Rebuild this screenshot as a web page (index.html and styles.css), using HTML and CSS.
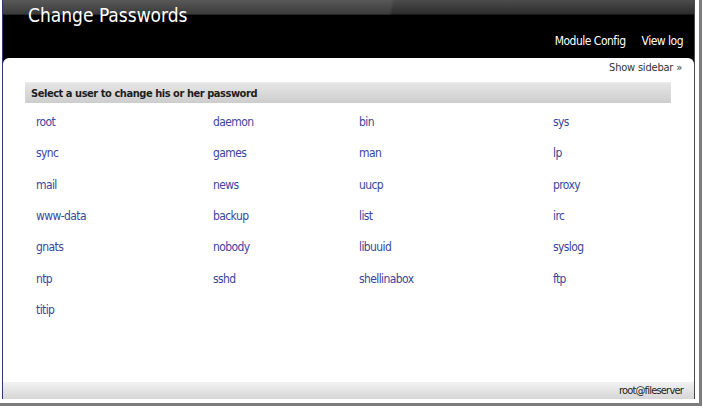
FILE: index.html
```html
<!DOCTYPE html>
<html lang="en">

<head>
  <link rel="stylesheet" href="styles.css">
</head>

<body>
  <div class="screen">
    <div class="window">
      <div class="topbar">
        <h1 class="title">Change Passwords</h1>
        <div class="toplinks">
          <a href="#">Module Config</a>
          <a href="#">View log</a>
        </div>
      </div>

      <div class="panel">
        <div class="sidebar-toggle"><a href="#">Show sidebar &raquo;</a></div>
        <div class="section-head">Select a user to change his or her password</div>
        <div class="users">
          <a href="#">root</a><a href="#">daemon</a><a href="#">bin</a><a href="#">sys</a>
          <a href="#">sync</a><a href="#">games</a><a href="#">man</a><a href="#">lp</a>
          <a href="#">mail</a><a href="#">news</a><a href="#">uucp</a><a href="#">proxy</a>
          <a href="#">www-data</a><a href="#">backup</a><a href="#">list</a><a href="#">irc</a>
          <a href="#">gnats</a><a href="#">nobody</a><a href="#">libuuid</a><a href="#">syslog</a>
          <a href="#">ntp</a><a href="#">sshd</a><a href="#">shellinabox</a><a href="#">ftp</a>
          <a href="#">titip</a>
        </div>
      </div>

      <div class="statusbar">root@fileserver</div>
    </div>
  </div>
</body>

</html>
```

FILE: styles.css
```css
body {
  margin: 0;
  background: #fff;
  font-family: 'DejaVu Sans Condensed', 'DejaVu Sans', sans-serif;
}

a {
  text-decoration: none;
}

/* screenshot frame: thin grey shadow right and below */
.screen {
  width: 702px;
  height: 406px;
  box-sizing: border-box;
  padding: 0 4px 4px 2px;
  border-right: 3px solid #7c7c7c;
  border-bottom: 3px solid #7c7c7c;
}

.window {
  width: 693px;
  height: 399px;
  box-sizing: border-box;
  border-left: 1px solid #2e3a6c;
  border-right: 1px solid #4a4a4a;
  display: flex;
  flex-direction: column;
  background: #000;
}

.topbar {
  height: 58px;
  flex: none;
  display: flex;
  flex-direction: column;
  justify-content: space-between;
  padding: 0 11px 0 25px;
  background:
    linear-gradient(100deg, rgba(255, 255, 255, 0.07) 0, rgba(255, 255, 255, 0.07) 56%, transparent 56.5%) top / 100% 15px no-repeat,
    linear-gradient(to bottom, #4c4c4c 0, #2c2c2c 14px, #000 15px);
}

.title {
  margin: 3px 0 0;
  font-size: 19px;
  font-weight: normal;
  color: #fff;
  line-height: 24px;
}

.toplinks {
  display: flex;
  justify-content: flex-end;
  gap: 16px;
  margin-bottom: 9px;
}

.toplinks a {
  color: #fff;
  font-size: 12px;
  line-height: 16px;
  letter-spacing: -0.5px;
}

.panel {
  flex: 1;
  background: #fff;
  border-radius: 6px 6px 0 0;
  padding: 0 23px 0 22px;
}

.sidebar-toggle {
  text-align: right;
  margin-right: -11px;
  padding-top: 3px;
  height: 24px;
  box-sizing: border-box;
  font-size: 11px;
  line-height: 14px;
}

.sidebar-toggle a {
  color: #333;
  letter-spacing: -0.2px;
}

.section-head {
  height: 20px;
  line-height: 21px;
  padding-left: 6px;
  font-size: 11px;
  font-weight: bold;
  color: #1e1e1e;
  letter-spacing: -0.45px;
  border-top: 1px solid #ececec;
  background: linear-gradient(to bottom, #e6e6e6, #cdcdcd);
}

.users {
  display: grid;
  grid-template-columns: 177px 146px 194px 1fr;
  grid-auto-rows: 31.35px;
  padding: 11px 0 0 11px;
}

.users a {
  color: #3a46a0;
  font-size: 12px;
  line-height: 16px;
  letter-spacing: -0.6px;
}

.statusbar {
  height: 17px;
  flex: none;
  text-align: right;
  padding-right: 11px;
  font-size: 11px;
  line-height: 17px;
  letter-spacing: -0.8px;
  color: #222;
  background: linear-gradient(to bottom, #f2f2f2, #d6d6d6);
}
```
